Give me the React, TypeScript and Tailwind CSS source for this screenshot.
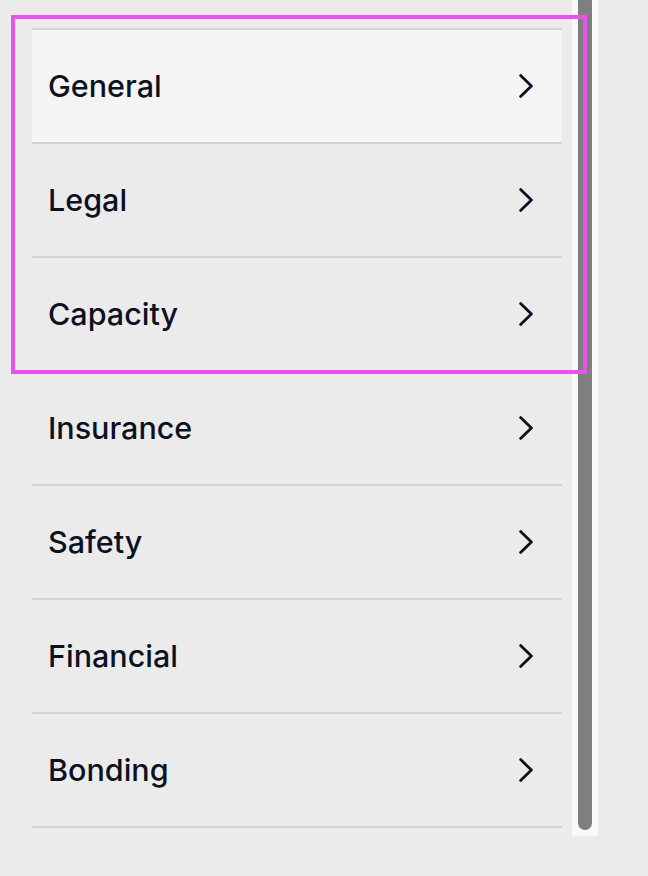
import React from 'react';

const sections = ['General', 'Legal', 'Capacity', 'Insurance', 'Safety', 'Financial', 'Bonding'];

const Chevron: React.FC = () => (
  <svg width="14" height="24" viewBox="0 0 14 24" fill="none" className="shrink-0">
    <polyline
      points="1.6,1.6 12.4,12 1.6,22.4"
      stroke="#0c1121"
      strokeWidth="2.8"
      strokeLinecap="round"
      strokeLinejoin="round"
    />
  </svg>
);

export default function App() {
  return (
    <div
      className="relative flex h-[876px] w-[648px] bg-[#ebebeb]"
      style={{ fontFamily: 'Inter, "Noto Sans", sans-serif' }}
    >
      {/* Sections list */}
      <div className="w-[562px] pl-[32px] pt-[28px]">
        <ul className="border-t-2 border-[#d4d4d4]">
          {sections.map((name, i) => (
            <li
              key={name}
              className={`flex h-[114px] items-center justify-between border-b-2 border-[#d4d4d4] pl-[16px] pr-[29px] ${
                i === 0 ? 'bg-[#f4f4f4]' : ''
              }`}
            >
              <span className="text-[30.5px] font-[550] text-[#0c1121]">{name}</span>
              <Chevron />
            </li>
          ))}
        </ul>
      </div>

      {/* Scrollbar */}
      <div className="ml-[10px] h-[836px] w-[26px] bg-[#f9f9f9] px-[6px]">
        <div className="h-[830px] rounded-b-full bg-[#7f7f7f]" />
      </div>

      {/* Selection outline */}
      <div className="pointer-events-none absolute left-[11px] top-[15px] h-[359px] w-[576px] border-4 border-[#ea52f0]" />
    </div>
  );
}
